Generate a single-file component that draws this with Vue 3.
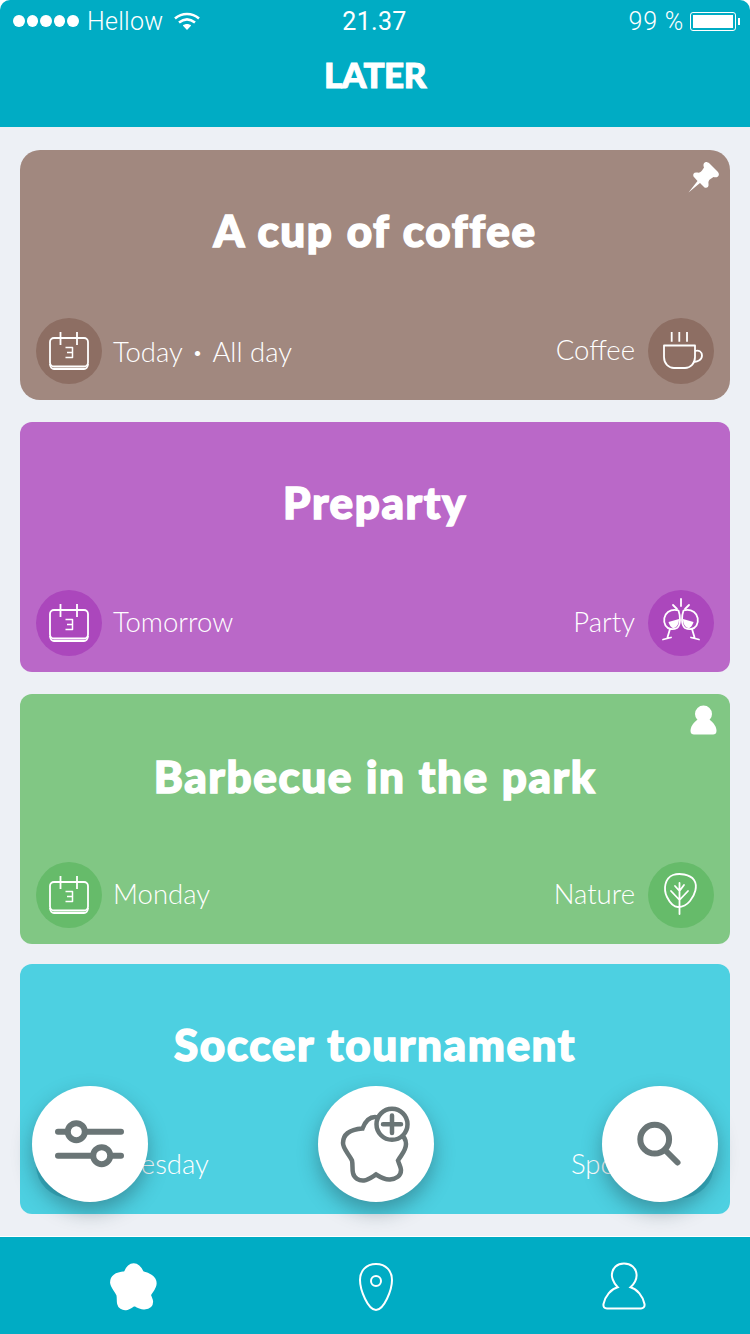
<script setup>
const starPath = 'M57 31C51 31 47 36 44.5 42.5C38 43 25 45 25 57C25 63 31 68 34 74.5C35 79 34 83 35 87C36 92 41 95 46 94.5C50 94 54 91 58 88.5C62 91 67 94 72 93.5C78 93 83 90 83 84C83 81 81 78 80 74.5C83 69 88 65 88 58C88 49 78 44 70 42.5C67 36 63 31 57 31Z';

const cards = [
  { id: 'coffee', title: 'A cup of coffee', when: 'Today', extra: 'All day', tag: 'Coffee', icon: 'cup', badge: 'pin' },
  { id: 'party', title: 'Preparty', when: 'Tomorrow', tag: 'Party', icon: 'glasses' },
  { id: 'nature', title: 'Barbecue in the park', when: 'Monday', tag: 'Nature', icon: 'tree', badge: 'person' },
  { id: 'sport', title: 'Soccer tournament', when: 'Tuesday', tag: 'Sport', icon: 'none' }
];
</script>

<template>
  <div class="screen">
    <header class="header">
      <div class="status">
        <div class="status-left">
          <span class="dots"><i v-for="n in 5" :key="n"></i></span>
          <span>Hellow</span>
          <svg class="wifi" viewBox="0 0 26 18" fill="none" stroke="#fff" stroke-width="2.6">
            <path d="M1 6.5C8 .5 18 .5 25 6.5" />
            <path d="M5 10.5C10 6.5 16 6.5 21 10.5" />
            <path d="M13 18L8.8 13.6C11 11.6 15 11.6 17.2 13.6Z" fill="#fff" stroke="none" />
          </svg>
        </div>
        <div class="status-time">21.37</div>
        <div class="status-right">
          <span>99 %</span>
          <span class="battery"><i></i></span>
          <span class="battery-nub"></span>
        </div>
      </div>
      <h1 class="page-title">LATER</h1>
    </header>

    <main class="list">
      <section v-for="card in cards" :key="card.id" class="card" :class="'card-' + card.id">
        <svg v-if="card.badge === 'pin'" class="badge badge-pin" viewBox="0 0 32 32" fill="#fff">
          <path d="M.5 31.5L9.5 20L5.5 15.5C4.5 13 6 11 9 11.5C11.5 12 13 11 14 9.5L16 6.5C15 4 15.5 1.5 18 1C19 1 20.5 1.5 21.5 2.5L29.5 10.5C31 12 31.5 14 30 15.5C28.5 16.5 27 16.5 25.5 16L22.5 18C21 19 20 20.5 20.5 23C21 26 19 27.5 16.5 26.5L12 22Z" />
        </svg>
        <svg v-if="card.badge === 'person'" class="badge badge-person" viewBox="0 0 27 30" fill="#fff">
          <circle cx="13.5" cy="9" r="8.5" />
          <path d="M7 15C3 18 .5 22 .5 26C.5 28.5 2 29.5 4 29.5H23C25 29.5 26.5 28.5 26.5 26C26.5 22 24 18 20 15Z" />
        </svg>

        <h2 class="card-title">{{ card.title }}</h2>

        <div class="meta">
          <div class="meta-side meta-when">
            <span class="icon-dot">
              <svg viewBox="0 0 66 66" fill="none" stroke="#fff" stroke-width="1.8" stroke-linejoin="round">
                <rect x="14" y="20" width="38" height="28.5" rx="4" />
                <path d="M14 46C14 49 16 51 18 51H48C50 51 52 49 52 46" />
                <path d="M24.5 14V27M41 14V27" />
                <path d="M29.5 29.5H36.5V39.5H29.5M31 34.5H36.5" stroke-width="1.5" />
              </svg>
            </span>
            <span class="meta-text">{{ card.when }}<template v-if="card.extra"><span class="sep">·</span>{{ card.extra }}</template></span>
          </div>
          <div class="meta-side meta-tag">
            <span class="meta-text">{{ card.tag }}</span>
            <span class="icon-dot">
              <svg v-if="card.icon === 'cup'" viewBox="0 0 66 66" fill="none" stroke="#fff" stroke-width="1.8" stroke-linejoin="round">
                <path d="M23.7 14V23.7M31.3 14V23.7M39 14V23.7" />
                <path d="M16 27.5H47V39C47 46 42 50 37 50H26C21 50 16 46 16 39Z" />
                <path d="M47 33C51 31.5 54 34 54 37.5C54 42 49 44.5 45 43.5" />
              </svg>
              <svg v-else-if="card.icon === 'glasses'" viewBox="0 0 66 66" fill="none" stroke="#fff" stroke-width="1.8" stroke-linecap="round" stroke-linejoin="round">
                <path d="M33 9V16M25 15L29 19M41 15L37 19" />
                <path d="M20 22C16 25 15 31 17.5 35.5C20 39.5 25 40 29 38C33 35 32.5 26 30.5 20.5C27 19.5 23 20 20 22Z" />
                <path d="M46 22C50 25 51 31 48.5 35.5C46 39.5 41 40 37 38C33 35 33.5 26 35.5 20.5C39 19.5 43 20 46 22Z" />
                <path d="M20.5 32L31 29C31 34 29 37 26 38C23.5 38.5 21.5 35.5 20.5 32Z" fill="#fff" stroke="none" />
                <path d="M45.5 32L35 29C35 34 37 37 40 38C42.5 38.5 44.5 35.5 45.5 32Z" fill="#fff" stroke="none" />
                <path d="M22 39L19.3 48M15 49.5L23 47.5M44 39L46.7 48M51 49.5L43 47.5" />
              </svg>
              <svg v-else-if="card.icon === 'tree'" viewBox="0 0 66 66" fill="none" stroke="#fff" stroke-width="1.8" stroke-linecap="round" stroke-linejoin="round">
                <path d="M25 13C31 11 42 12 46 18C50 24 47 33 42 39C38 44 34 45 30 45C26 45 22 41 19 35C15 27 17 16 25 13Z" />
                <path d="M31.5 21V52M31.5 38L23 29M31.5 38L40 29M31.5 29L27 24M31.5 29L36 23" />
              </svg>
            </span>
          </div>
        </div>
      </section>
    </main>

    <button class="fab fab-filter">
      <svg viewBox="0 0 116 116" fill="none" stroke="#6a7576" stroke-width="6" stroke-linecap="round">
        <path d="M26 45.7H89M26 69.7H89" />
        <circle cx="44.3" cy="45.7" r="8.5" fill="#fff" />
        <circle cx="69.7" cy="69.7" r="8.5" fill="#fff" />
      </svg>
    </button>
    <button class="fab fab-add">
      <svg viewBox="0 0 116 116" fill="none" stroke="#6a7576" stroke-width="4.5">
        <path :d="starPath" />
        <circle cx="74" cy="38.3" r="15.5" fill="#fff" />
        <path d="M65 38.3H83M74 29.5V47" stroke-linecap="round" />
      </svg>
    </button>
    <button class="fab fab-search">
      <svg viewBox="0 0 116 116" fill="none" stroke="#6a7576" stroke-width="6" stroke-linecap="round">
        <circle cx="52.7" cy="53.2" r="14.4" />
        <path d="M63 64L75.5 76.5" />
      </svg>
    </button>

    <footer class="tabs">
      <svg class="tab-star" viewBox="22 28 68 69" fill="#fff" stroke="#fff" stroke-width="3">
        <path :d="starPath" />
      </svg>
      <svg class="tab-pin" viewBox="0 0 36 50" fill="none" stroke="#fff" stroke-width="2">
        <path d="M18 2C8 2 2 9 2 18C2 28 10 48 18 48C26 48 34 28 34 18C34 9 28 2 18 2Z" />
        <circle cx="18" cy="19" r="5" />
      </svg>
      <svg class="tab-user" viewBox="0 0 44 48" fill="none" stroke="#fff" stroke-width="2">
        <path d="M15.7 25.3C10.5 20 9.5 14 10 12C10.5 6 15 1.5 22 1.5C29 1.5 34 6 34.5 12C35 16 33 21 28.5 25.3C35 27 41 34 42.5 42C43 45 41 46.5 39 46.5H5C2.5 46.5 1 45 1.5 42C3 34 9 27 15.7 25.3Z" />
      </svg>
    </footer>
  </div>
</template>

<style>
html,
body {
  margin: 0;
  background: #fff;
}
</style>

<style scoped>
.screen {
  position: relative;
  width: 750px;
  height: 1334px;
  display: flex;
  flex-direction: column;
  overflow: hidden;
  background: #edf0f5;
  border-radius: 10px 10px 0 0;
  font-family: Lato, "Liberation Sans", sans-serif;
  color: #fff;
}

.header {
  height: 127px;
  flex: none;
  background: #00acc4;
}

.status {
  display: grid;
  grid-template-columns: 1fr auto 1fr;
  align-items: center;
  height: 42px;
  padding: 0 10px 0 13px;
  font-family: Roboto, "Liberation Sans", sans-serif;
  font-weight: 300;
  font-size: 25px;
  letter-spacing: 0.3px;
}

.status-left,
.status-right {
  display: flex;
  align-items: center;
}

.status-right {
  justify-content: flex-end;
  letter-spacing: 0.8px;
}

.dots {
  display: flex;
  gap: 2px;
  margin-right: 8px;
}

.dots i {
  width: 11.6px;
  height: 12px;
  border-radius: 50%;
  background: #fff;
}

.wifi {
  width: 26px;
  height: 18px;
  margin-left: 10px;
}

.status-time {
  font-weight: 400;
  margin-left: -4px;
}

.battery {
  box-sizing: border-box;
  width: 46px;
  height: 19px;
  margin-left: 6px;
  padding: 2px;
  border: 1px solid #fff;
  border-radius: 3px;
}

.battery i {
  display: block;
  height: 100%;
  background: #fff;
}

.battery-nub {
  width: 2px;
  height: 7px;
  margin-left: 2px;
  background: #fff;
}

.page-title {
  margin: 0;
  padding-top: 9px;
  text-align: center;
  font-size: 35px;
  line-height: 46px;
  font-weight: 900;
  letter-spacing: -0.5px;
  -webkit-text-stroke: 1px #fff;
}

.list {
  flex: 1;
  padding-top: 23px;
  padding-left: 20px;
  padding-right: 20px;
}

.card {
  position: relative;
  box-sizing: border-box;
  height: 250px;
  padding: 0 16px 16px;
  display: flex;
  flex-direction: column;
  border-radius: 12px;
}

.card + .card {
  margin-top: 22px;
}

.card-coffee {
  background: #a1887f;
  border-radius: 20px;
}

.card-coffee .icon-dot {
  background: #8d6e63;
}

.card-party {
  background: #ba68c8;
}

.card-party .icon-dot {
  background: #ab47bc;
}

.card-nature {
  background: #81c784;
}

.card-nature .icon-dot {
  background: #66bb6a;
}

.card + .card-sport {
  margin-top: 20px;
}

.card-sport {
  background: #4dd0e1;
}

.card-sport .icon-dot {
  background: #35b6c9;
}

.badge {
  position: absolute;
}

.badge-pin {
  top: 11px;
  right: 10px;
  width: 32px;
  height: 32px;
}

.badge-person {
  top: 11px;
  right: 13px;
  width: 27px;
  height: 30px;
}

.card-title {
  flex: 1;
  margin: 0;
  padding-top: 52px;
  text-align: center;
  font-size: 44px;
  line-height: 56px;
  font-weight: 900;
  letter-spacing: 1.6px;
  word-spacing: 1px;
  -webkit-text-stroke: 1.5px #fff;
}

.card-nature .card-title {
  padding-top: 54px;
}

.meta {
  display: flex;
  align-items: center;
  justify-content: space-between;
}

.meta-side {
  display: flex;
  align-items: center;
}

.meta-when {
  gap: 11px;
}

.meta-tag {
  gap: 13px;
}

.meta-text {
  font-size: 27.5px;
  font-weight: 300;
  margin-top: -4px;
}

.card-coffee .meta-when .meta-text {
  margin-top: 0;
}

.sep {
  margin: 0 11px;
  font-weight: 700;
}

.icon-dot {
  width: 66px;
  height: 66px;
  border-radius: 50%;
  flex: none;
}

.icon-dot svg {
  display: block;
  width: 66px;
  height: 66px;
}

.fab {
  position: absolute;
  top: 1086px;
  width: 116px;
  height: 116px;
  padding: 0;
  border: 0;
  border-radius: 50%;
  background: #fff;
  box-shadow: 0 9px 20px rgba(30, 60, 70, 0.4);
}

.fab svg {
  display: block;
  width: 116px;
  height: 116px;
}

.fab-filter {
  left: 32px;
}

.fab-add {
  left: 318px;
}

.fab-search {
  left: 602px;
}

.tabs {
  position: relative;
  box-sizing: border-box;
  height: 98px;
  flex: none;
  display: grid;
  grid-template-columns: repeat(3, 1fr);
  align-items: start;
  justify-items: center;
  padding-top: 25px;
  border-top: 1px solid #fff;
  background: #00acc4;
}

.tab-star {
  width: 48px;
  height: 49px;
  margin-left: 16px;
}

.tab-pin {
  width: 36px;
  height: 50px;
  margin-left: 2px;
}

.tab-user {
  width: 44px;
  height: 48px;
  margin-left: -2px;
}
</style>
